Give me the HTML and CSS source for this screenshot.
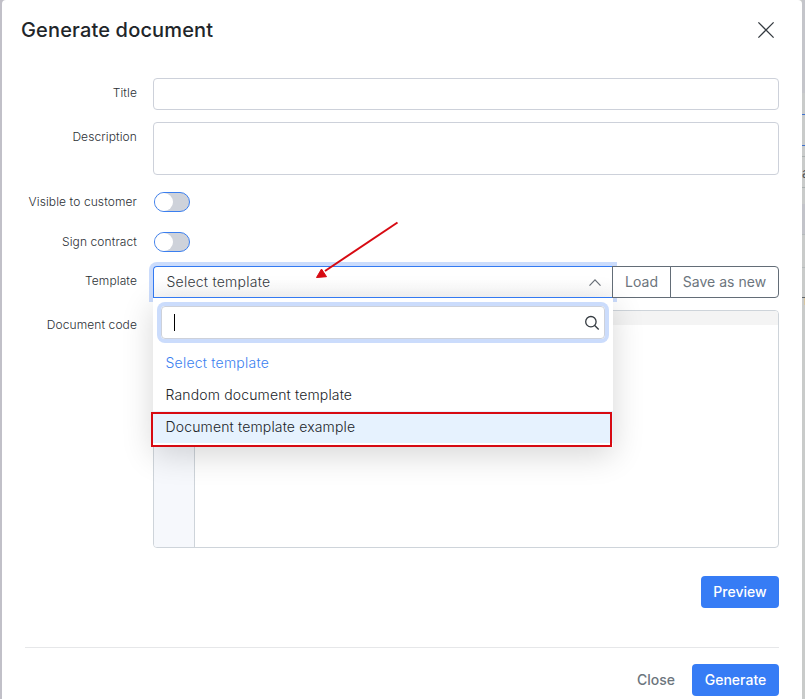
FILE: index.html
```html
<!DOCTYPE html>
<html lang="en">
<head>
<meta charset="utf-8">
<title>Generate document</title>
<link rel="stylesheet" href="styles.css">
</head>
<body>
<div class="backdrop">
  <div class="page-edge">
    <span class="edge-button"></span>
    <span class="edge-row">a</span>
    <span class="edge-band"></span>
    <span class="edge-line"></span>
    <span class="edge-mark"></span>
  </div>
  <main class="modal">
    <header class="modal-header">
      <h1>Generate document</h1>
      <svg class="close-icon" width="18" height="18" viewBox="0 0 18 18"><path d="M1.4 1.4 16.6 16.6M16.6 1.4 1.4 16.6"/></svg>
    </header>
    <form class="form">
      <label>Title</label>
      <div class="input"></div>
      <label>Description</label>
      <div class="input textarea"></div>
      <label>Visible to customer</label>
      <div class="switch"><span></span></div>
      <label>Sign contract</label>
      <div class="switch"><span></span></div>
      <label class="template-label">Template</label>
      <div class="group">
        <div class="select">
          <span>Select template</span>
          <svg width="14" height="10" viewBox="0 0 14 10"><path d="M1.5 8.6 7 2.8 12.5 8.6"/></svg>
        </div>
        <div class="addon load">Load</div>
        <div class="addon save">Save as new</div>
        <div class="dropdown">
          <div class="search">
            <span class="caret"></span>
            <svg width="16" height="16" viewBox="0 0 16 16"><circle cx="6.9" cy="6.7" r="5.2"/><path d="m10.7 10.5 4 4"/></svg>
          </div>
          <div class="option selected">Select template</div>
          <div class="option">Random document template</div>
          <div class="option active">Document template example</div>
          <div class="highlight"></div>
        </div>
        <svg class="arrow" width="90" height="62" viewBox="0 0 90 62"><path class="shaft" d="M84.5 5.5 12 54"/><path class="head" d="M3.5 60.5 8.5 52 13.5 59.7z"/></svg>
      </div>
      <label>Document code</label>
      <div class="editor"><div class="toolbar"></div><div class="gutter"></div></div>
    </form>
    <div class="preview-row"><button class="primary preview">Preview</button></div>
    <footer class="modal-footer">
      <button class="plain">Close</button>
      <button class="primary generate">Generate</button>
    </footer>
  </main>
</div>
</body>
</html>
```
FILE: styles.css
```css
* { box-sizing: border-box; }
body { margin: 0; font-family: Inter, "Liberation Sans", sans-serif; font-size: 14px; color: #212529; overflow: hidden; }
.backdrop { position: relative; width: 805px; height: 699px; padding-left: 2px; overflow: hidden; background: linear-gradient(90deg, #c1c0c8 0 50%, #c9cbca 50%); }
.modal { position: relative; width: 800px; height: 710px; padding: 0 23px; background: #fff; border-radius: 4px; }
.page-edge { position: absolute; left: 802px; top: 0; width: 3px; height: 699px; overflow: hidden; background: linear-gradient(#c4c5ca 0 93px, #c9cbca 93px); }
.page-edge span { position: absolute; left: 0; width: 3px; }
.edge-button { top: 114px; height: 32px; border: solid #3f72d0; border-width: 1px 0; }
.edge-row { top: 156px; height: 32px; border: solid #aab0b0; border-width: 1px 0; font-size: 13px; line-height: 32px; color: #53585c; }
.edge-band { top: 204px; height: 31px; background: #c2c3c9; border-bottom: 1px solid #b5babb; }
.edge-line { top: 267px; height: 1px; background: #b5babb; }
.edge-mark { top: 297px; height: 8px; background: linear-gradient(90deg, #c9cbca 66%, #d8c6a1 66%); border-top: 1px solid #606568; }
.modal-header { display: flex; justify-content: space-between; align-items: center; height: 60px; margin: 0 4px 18px -4px; }
h1 { margin: 0; font-size: 20px; line-height: 28px; font-weight: 500; letter-spacing: 0.16px; }
svg { fill: none; stroke: #343a40; stroke-width: 1.3; }
.form { display: grid; grid-template-columns: 112px 626px; column-gap: 16px; grid-template-rows: 32px 53px 28px 28px 31px 238px; row-gap: 12px; }
label { text-align: right; font-size: 12px; font-weight: 300; line-height: 20px; padding-top: 5px; letter-spacing: 0.1px; white-space: nowrap; color: #2b3035; }
.template-label { padding-top: 4px; }
.input { border: 1px solid #cdd1da; border-radius: 4px; }
.switch { width: 36px; height: 20px; margin: 5px 0 0 1px; border: 1px solid #3b7ff0; border-radius: 10px; background: #ced2da; }
.switch span { display: block; width: 18px; height: 18px; border-radius: 50%; background: #fff; }
.group { position: relative; z-index: 2; display: flex; height: 32px; font-size: 14px; font-weight: 300; letter-spacing: 0.15px; margin-top: -1px; }
.select { display: flex; align-items: center; justify-content: space-between; width: 460px; padding: 0 11px 1px 12.5px; border: 1px solid #337af2; border-right: 0; border-radius: 4px 0 0 0; box-shadow: 0 0 0 4px #cbdcfc; background: linear-gradient(#fff 40%, #f8f8f8); color: #343a40; letter-spacing: 0.24px; }
.select svg { stroke: #697078; stroke-width: 1.2; }
.addon { position: relative; display: flex; align-items: center; justify-content: center; padding-bottom: 1px; border: 1px solid #636d77; background: #fff; color: #6c757d; font-weight: 400; letter-spacing: 0.03px; }
.load { width: 59px; margin-left: -1px; }
.save { width: 109px; margin-left: -1px; border-radius: 0 4px 4px 0; }
.dropdown { position: absolute; left: 0; top: 32px; width: 460px; height: 149px; padding-top: 8px; background: #fff; box-shadow: 0 8px 30px rgba(0,0,0,.16); }
.dropdown::before { content: ""; position: absolute; left: 0; top: -1px; width: 459px; height: 1px; background: #337af2; }
.search { display: flex; align-items: center; justify-content: space-between; width: 444px; height: 33px; margin: 0 0 8px 8px; padding: 0 4px 0 12px; border: 1px solid #cdd1da; border-radius: 4px; box-shadow: 0 0 0 4px #cbdcfc; }
.caret { width: 1px; height: 17px; background: #000; }
.option { height: 32px; line-height: 32px; padding-left: 12.5px; color: #212529; }
.selected { color: #3b7ff0; letter-spacing: 0.22px; }
.active { background: #e6f2fe; }
.highlight { position: absolute; left: -2px; top: 114px; width: 461px; height: 35px; border: 2px solid #d70a12; }
.arrow { position: absolute; left: 160px; top: -49px; }
.shaft { stroke: #d70a12; stroke-width: 2; }
.head { fill: #d70a12; stroke: #d70a12; stroke-width: 1; }
.editor { border: 1px solid #ced4da; border-radius: 4px; overflow: hidden; display: grid; grid-template-rows: 14px 1fr; }
.toolbar { background: #f4f4f4; }
.gutter { width: 41px; background: #f6f8fc; border-right: 1px solid #ced4da; }
.preview-row { display: flex; justify-content: flex-end; padding: 28px 0 39px; border-bottom: 1px solid #e6e7e9; }
.modal-footer { display: flex; justify-content: flex-end; padding-top: 16px; }
button { height: 32px; padding: 0; border: 0; border-radius: 4px; font: 500 14px/32px Inter, "Liberation Sans", sans-serif; }
.primary { background: #367cf5; color: #fff; }
.preview { width: 78px; }
.generate { width: 87px; }
.plain { width: 72px; background: none; color: #6c757d; }
```
